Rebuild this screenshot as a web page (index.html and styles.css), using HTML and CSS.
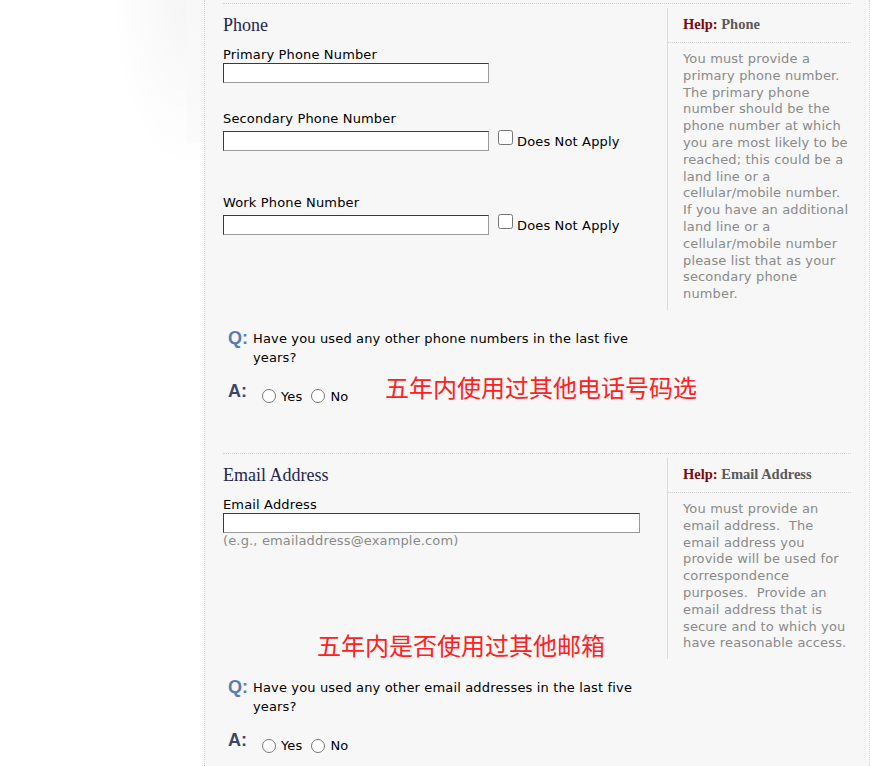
FILE: index.html
```html
<!DOCTYPE html>
<html lang="en">
<head>
<meta charset="utf-8">
<title>Phone and Email</title>
<link rel="stylesheet" href="styles.css">
</head>
<body>
<div class="page">
  <div class="gutter"></div>
  <main class="panel">
    <section class="section section-phone">
      <div class="section-row">
        <div class="fields">
          <h2 class="section-title">Phone</h2>
          <div class="field field-first">
            <label class="field-label" for="p1">Primary Phone Number</label>
            <div class="field-row"><input class="text-input" id="p1" type="text"></div>
          </div>
          <div class="field field-second">
            <label class="field-label" for="p2">Secondary Phone Number</label>
            <div class="field-row">
              <input class="text-input" id="p2" type="text">
              <label class="na"><input class="na-box" type="checkbox"><span class="na-text">Does Not Apply</span></label>
            </div>
          </div>
          <div class="field field-third">
            <label class="field-label" for="p3">Work Phone Number</label>
            <div class="field-row">
              <input class="text-input" id="p3" type="text">
              <label class="na"><input class="na-box" type="checkbox"><span class="na-text">Does Not Apply</span></label>
            </div>
          </div>
        </div>
        <aside class="help">
          <h3 class="help-title"><span class="help-key">Help:</span> Phone</h3>
          <p class="help-text">You must provide a primary phone number. The primary phone number should be the phone number at which you are most likely to be reached; this could be a land line or a cellular/mobile number. If you have an additional land line or a cellular/mobile number please list that as your secondary phone number.</p>
        </aside>
      </div>
      <div class="qa">
        <div class="qa-row">
          <span class="qa-icon qa-q">Q:</span>
          <span class="qa-text">Have you used any other phone numbers in the last five years?</span>
        </div>
        <div class="qa-row qa-answer">
          <span class="qa-icon qa-a">A:</span>
          <div class="radio-group">
            <label class="radio-option"><input type="radio" name="otherphone"><span>Yes</span></label>
            <label class="radio-option"><input type="radio" name="otherphone"><span>No</span></label>
          </div>
        </div>
      </div>
    </section>

    <section class="section section-email">
      <div class="section-row">
        <div class="fields">
          <h2 class="section-title">Email Address</h2>
          <div class="field field-first">
            <label class="field-label" for="e1">Email Address</label>
            <div class="field-row"><input class="text-input text-input-wide" id="e1" type="text"></div>
            <div class="field-hint">(e.g., emailaddress@example.com)</div>
          </div>
        </div>
        <aside class="help">
          <h3 class="help-title"><span class="help-key">Help:</span> Email Address</h3>
          <p class="help-text">You must provide an email address.&nbsp; The email address you provide will be used for correspondence purposes.&nbsp; Provide an email address that is secure and to which you have reasonable access.</p>
        </aside>
      </div>
      <div class="qa">
        <div class="qa-row">
          <span class="qa-icon qa-q">Q:</span>
          <span class="qa-text">Have you used any other email addresses in the last five years?</span>
        </div>
        <div class="qa-row qa-answer">
          <span class="qa-icon qa-a">A:</span>
          <div class="radio-group">
            <label class="radio-option"><input type="radio" name="otheremail"><span>Yes</span></label>
            <label class="radio-option"><input type="radio" name="otheremail"><span>No</span></label>
          </div>
        </div>
      </div>
    </section>
  </main>
  <div class="note note-phone">五年内使用过其他电话号码选</div>
  <div class="note note-email">五年内是否使用过其他邮箱</div>
</div>
</body>
</html>
```
FILE: styles.css
```css
html, body {
  margin: 0;
  padding: 0;
  background: #ffffff;
}

body {
  font-family: "DejaVu Sans", Verdana, sans-serif;
  font-size: 13px;
  letter-spacing: 0.15px;
  color: #000;
}

.page {
  position: relative;
  display: flex;
  min-height: 766px;
}

.gutter {
  flex: 0 0 204px;
  background:
    linear-gradient(#f8f8f8, #f9f9f9 70%, #fbfbfb) right top / 17px 143px no-repeat,
    radial-gradient(ellipse 75px 170px at 187px 0, rgba(0, 0, 0, 0.04), rgba(0, 0, 0, 0) 100%) no-repeat;
}

.panel {
  flex: 0 0 auto;
  width: 628px;
  padding: 0 18px;
  background: #f7f7f7;
  border-left: 1px dotted #d8d1c2;
  border-right: 1px dotted #d6d6d6;
}

.section {
  border-top: 1px dotted #d0d0d0;
}

.section-phone {
  margin-top: 3px;
  padding-bottom: 47px;
}

.section-row {
  display: flex;
  align-items: flex-start;
}

.fields {
  width: 444px;
}

.section-title {
  margin: 11px 0 0;
  font-family: "Liberation Serif", "Times New Roman", serif;
  font-weight: normal;
  font-size: 18px;
  line-height: 21px;
  letter-spacing: 0;
  color: #25264f;
}

.field-label {
  display: block;
  line-height: 15px;
  color: #000;
}

.field-first {
  margin-top: 11px;
}

.field-second {
  margin-top: 28px;
}

.field-third {
  margin-top: 44px;
}

.field-row {
  display: flex;
  align-items: flex-start;
  margin-top: 5px;
}

.field-first .field-row {
  margin-top: 1px;
}

.text-input {
  box-sizing: border-box;
  width: 266px;
  height: 20px;
  margin: 0;
  padding: 1px 2px;
  border: 1px solid;
  border-color: #3a3a3a #9a9a9a #9a9a9a #3a3a3a;
  background: #fff;
  font: 13px "DejaVu Sans", Verdana, sans-serif;
}

.text-input-wide {
  width: 417px;
}

.field-hint {
  line-height: 15px;
  color: #8a8a8a;
}

.na {
  display: flex;
  align-items: flex-start;
  margin-left: 9px;
}

.na-box {
  width: 15px;
  height: 15px;
  margin: -1px 0 0 0;
}

.na-text {
  margin-top: 3px;
  margin-left: 4px;
  line-height: 15px;
}

.help {
  flex: 0 0 auto;
  width: 183px;
  margin-top: 4px;
  border-left: 1px solid #dcdcdc;
}

.help-title {
  margin: 0;
  padding: 8px 0 9px 15px;
  border-bottom: 1px dotted #cfcfcf;
  font-family: "Liberation Serif", "Times New Roman", serif;
  font-weight: bold;
  font-size: 14.5px;
  line-height: 17px;
  letter-spacing: 0;
  color: #595959;
}

.help-key {
  color: #7c0a0a;
}

.help-text {
  width: 167px;
  margin: 0;
  padding: 8px 0 7px 15px;
  line-height: 16.8px;
  color: #8a8a8a;
}

.qa {
  margin-top: 19px;
}

.qa-row {
  display: flex;
  align-items: flex-start;
}

.qa-icon {
  flex: 0 0 30px;
  box-sizing: border-box;
  padding-left: 5px;
  font-family: "Liberation Sans", Arial, sans-serif;
  font-weight: bold;
  font-size: 18px;
  line-height: 19px;
  letter-spacing: 0;
}

.qa-q {
  color: #5a7cb4;
}

.qa-a {
  color: #3a4866;
}

.qa-text {
  width: 402px;
  line-height: 19px;
  color: #000;
}

.qa-answer {
  margin-top: 15px;
}

.radio-group {
  display: flex;
  margin-top: 5px;
  padding-left: 9px;
}

.radio-option {
  display: flex;
  align-items: center;
  line-height: 19px;
  margin-right: 9px;
}

.radio-option input {
  width: 14px;
  height: 14px;
  margin: 0 5px 0 0;
}

.note {
  position: absolute;
  font-family: "Noto Sans CJK SC", sans-serif;
  font-size: 24px;
  line-height: 24px;
  letter-spacing: 0;
  color: #ff2020;
  white-space: nowrap;
}

.note-phone {
  left: 385px;
  top: 375px;
}

.note-email {
  left: 317px;
  top: 633px;
}
```
